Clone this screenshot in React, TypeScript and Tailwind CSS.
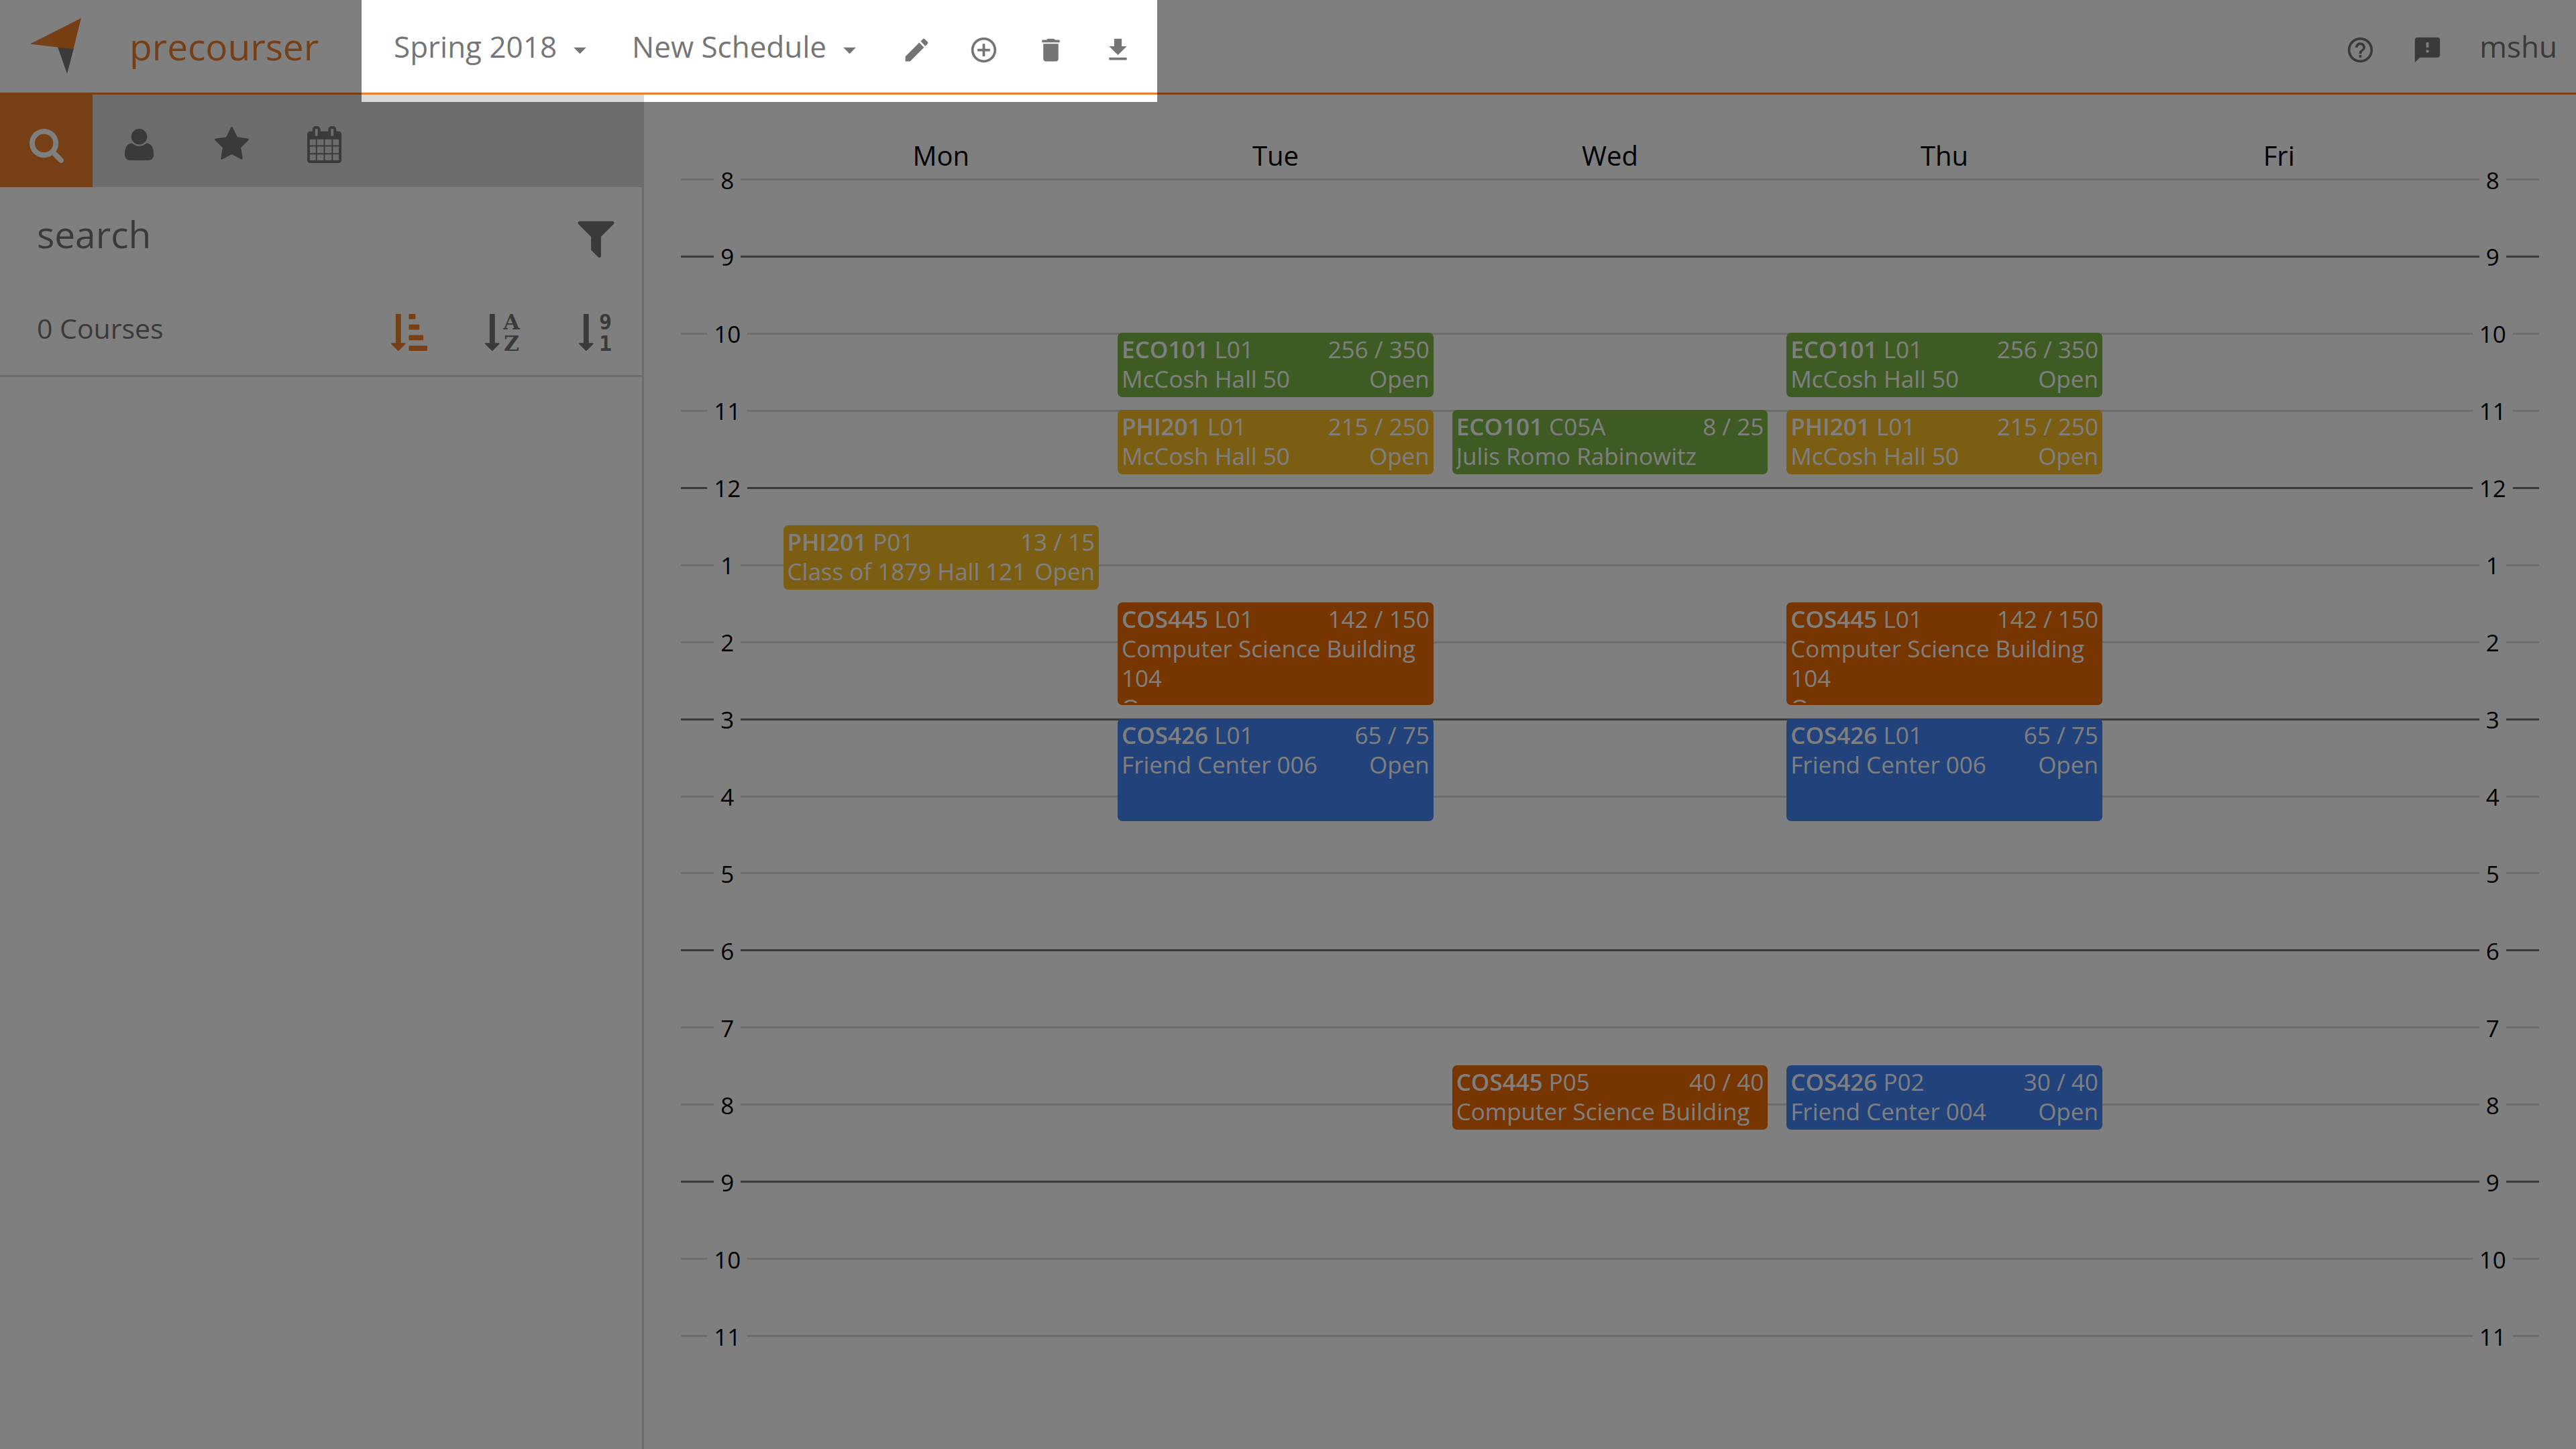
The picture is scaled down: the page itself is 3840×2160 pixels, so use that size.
import type { ReactNode } from "react";
import { MdEdit, MdAddCircleOutline, MdDelete, MdFileDownload, MdHelpOutline, MdFeedback, MdArrowDropDown } from "react-icons/md";

type Course = {
  code: string;
  section: string;
  seats: string;
  place: string;
  status?: string;
  day: number;
  start: number;
  minutes: number;
  tone: string;
};

const GREEN = "bg-[#7eb648]";
const YELLOW = "bg-[#f8bd26]";
const ORANGE = "bg-[#ee6a00]";
const BLUE = "bg-[#4484f6]";

/* start is counted in minutes from 8:00 */
const EVENTS: Course[] = [
  { code: "PHI201", section: "P01", seats: "13 / 15", place: "Class of 1879 Hall 121", status: "Open", day: 1, start: 270, minutes: 50, tone: YELLOW },
  { code: "ECO101", section: "L01", seats: "256 / 350", place: "McCosh Hall 50", status: "Open", day: 2, start: 120, minutes: 50, tone: GREEN },
  { code: "PHI201", section: "L01", seats: "215 / 250", place: "McCosh Hall 50", status: "Open", day: 2, start: 180, minutes: 50, tone: YELLOW },
  { code: "COS445", section: "L01", seats: "142 / 150", place: "Computer Science Building 104", status: "Open", day: 2, start: 330, minutes: 80, tone: ORANGE },
  { code: "COS426", section: "L01", seats: "65 / 75", place: "Friend Center 006", status: "Open", day: 2, start: 420, minutes: 80, tone: BLUE },
  { code: "ECO101", section: "C05A", seats: "8 / 25", place: "Julis Romo Rabinowitz", day: 3, start: 180, minutes: 50, tone: GREEN },
  { code: "COS445", section: "P05", seats: "40 / 40", place: "Computer Science Building", day: 3, start: 690, minutes: 50, tone: ORANGE },
  { code: "ECO101", section: "L01", seats: "256 / 350", place: "McCosh Hall 50", status: "Open", day: 4, start: 120, minutes: 50, tone: GREEN },
  { code: "PHI201", section: "L01", seats: "215 / 250", place: "McCosh Hall 50", status: "Open", day: 4, start: 180, minutes: 50, tone: YELLOW },
  { code: "COS445", section: "L01", seats: "142 / 150", place: "Computer Science Building 104", status: "Open", day: 4, start: 330, minutes: 80, tone: ORANGE },
  { code: "COS426", section: "L01", seats: "65 / 75", place: "Friend Center 006", status: "Open", day: 4, start: 420, minutes: 80, tone: BLUE },
  { code: "COS426", section: "P02", seats: "30 / 40", place: "Friend Center 004", status: "Open", day: 4, start: 690, minutes: 50, tone: BLUE },
];

const HOURS = [8, 9, 10, 11, 12, 1, 2, 3, 4, 5, 6, 7, 8, 9, 10, 11];
const DAYS = ["Mon", "Tue", "Wed", "Thu", "Fri"];

const PATHS = {
  search:
    "M1216 832q0-185-131.5-316.5t-316.5-131.5-316.5 131.5-131.5 316.5 131.5 316.5 316.5 131.5 316.5-131.5 131.5-316.5zm512 832q0 52-38 90t-90 38q-54 0-90-38l-343-342q-179 124-399 124-143 0-273.5-55.5t-225-150-150-225-55.5-273.5 55.5-273.5 150-225 225-150 273.5-55.5 273.5 55.5 225 150 150 225 55.5 273.5q0 220-124 399l343 343q37 37 37 90z",
  user: "M1600 1405q0 120-73 189.5t-194 69.5h-874q-121 0-194-69.5t-73-189.5q0-53 3.5-103.5t14-109 26.500-108.500 43-97.500 62-81 85.500-53.500 111.500-20q9 0 42 21.500t74.500 48 108 48 133.500 21.500 133.500-21.500 108-48 74.500-48 42-21.500q61 0 111.500 20t85.500 53.500 62 81 43 97.500 26.500 108.500 14 109 3.500 103.500zm-320-893q0 159-112.500 271.500t-271.500 112.500-271.500-112.500-112.500-271.500 112.500-271.500 271.500-112.500 271.500 112.500 112.500 271.500z",
  star: "M1728 647q0 22-26 48l-363 354 86 500q1 7 1 20 0 21-10.5 35.5t-30.5 14.5q-19 0-40-12l-449-236-449 236q-22 12-40 12-21 0-31.5-14.5t-10.5-35.5q0-6 2-20l86-500-364-354q-25-27-25-48 0-37 56-46l502-73 225-455q19-41 49-41t49 41l225 455 502 73q56 9 56 46z",
  calendar:
    "M192 1664h288v-288h-288v288zm352 0h320v-288h-320v288zm-352-352h288v-320h-288v320zm352 0h320v-320h-320v320zm-352-384h288v-288h-288v288zm736 736h320v-288h-320v288zm-384-736h320v-288h-320v288zm768 736h288v-288h-288v288zm-384-352h320v-320h-320v320zm-352-864v-288q0-13-9.500-22.500t-22.500-9.500h-64q-13 0-22.500 9.500t-9.500 22.500v288q0 13 9.500 22.500t22.500 9.500h64q13 0 22.500-9.500t9.500-22.500zm736 864h288v-320h-288v320zm-384-384h320v-288h-320v288zm384 0h288v-288h-288v288zm32-480v-288q0-13-9.500-22.500t-22.500-9.500h-64q-13 0-22.500 9.500t-9.500 22.500v288q0 13 9.500 22.500t22.500 9.500h64q13 0 22.500-9.500t9.500-22.500zm384-64v1280q0 52-38 90t-90 38h-1408q-52 0-90-38t-38-90v-1280q0-52 38-90t90-38h128v-96q0-66 47-113t113-47h64q66 0 113 47t47 113v96h384v-96q0-66 47-113t113-47h64q66 0 113 47t47 113v96h128q52 0 90 38t38 90z",
  filter:
    "M1595 295q17 41-14 70l-493 493v742q0 42-39 59-13 5-25 5-27 0-45-19l-256-256q-19-19-19-45v-486l-493-493q-31-29-14-70 17-39 59-39h1280q42 0 59 39z",
  arrow:
    "M736 1440q0 12-10 24l-319 319q-10 9-23 9-12 0-23-9l-320-320q-15-16-7-35 8-20 30-20h192v-1376q0-14 9-23t23-9h192q14 0 23 9t9 23v1376h192q14 0 23 9t9 23z",
  bars: "M1792 1568v192q0 14-9 23t-23 9h-832q-14 0-23-9t-9-23v-192q0-14 9-23t23-9h832q14 0 23 9t9 23zm-192-512v192q0 14-9 23t-23 9h-640q-14 0-23-9t-9-23v-192q0-14 9-23t23-9h640q14 0 23 9t9 23zm-192-512v192q0 14-9 23t-23 9h-448q-14 0-23-9t-9-23v-192q0-14 9-23t23-9h448q14 0 23 9t9 23zm-192-512v192q0 14-9 23t-23 9h-256q-14 0-23-9t-9-23v-192q0-14 9-23t23-9h256q14 0 23 9t9 23z",
};

function Glyph({ d, size = "size-[55px]" }: { d: string; size?: string }) {
  return (
    <svg viewBox="0 0 1792 1792" className={size} fill="currentColor" aria-hidden="true">
      <path d={d} />
    </svg>
  );
}

function SortPair({ top, bottom, font }: { top: string; bottom: string; font: string }) {
  return (
    <svg viewBox="0 0 1792 1792" className="size-[55px] overflow-visible" fill="currentColor" aria-hidden="true">
      <path d={PATHS.arrow} />
      <g fontFamily={font} fontWeight="700" fontSize="1030" textAnchor="middle">
        <text x="1320" y="764">{top}</text>
        <text x="1320" y="1792">{bottom}</text>
      </g>
    </svg>
  );
}

function Logo() {
  return (
    <svg viewBox="0 0 76 84" className="h-[84px] w-[76px]" aria-hidden="true">
      <path d="M41 43 65 45 55 83Z" fill="#757575" />
      <path d="M76 0 0 38.500 64.500 46Z" fill="#ee7c28" />
      <path d="M0 38.500 24 27 42 43.500Z" fill="#ec8434" />
    </svg>
  );
}

function Tab({ label, active = false, children }: { label: string; active?: boolean; children: ReactNode }) {
  return (
    <button
      aria-label={label}
      className={`flex w-[138px] items-center justify-center pt-[11px] ${active ? "bg-[#ee7f2d] text-white" : ""}`}
    >
      {children}
    </button>
  );
}

function TopBar() {
  const icon = "mt-[10px] size-[45px]";
  return (
    <header className="flex h-[141px] items-stretch border-b-[3px] border-[#ee7f2d] text-[44px] text-[#757575]">
      <a href="#" className="flex w-[539px] items-center gap-[72px] pl-[45px] text-[55px] text-[#ee7f2d]">
        <Logo />
        precourser
      </a>
      <div className="relative flex w-[1186px] items-center">
        <button className="ml-[48px] flex items-center gap-[12px]">
          Spring 2018
          <MdArrowDropDown className={icon} />
        </button>
        <button className="ml-[55px] flex items-center gap-[12px]">
          New Schedule
          <MdArrowDropDown className={icon} />
        </button>
        <div className="ml-[55px] flex gap-[55px]">
          <button aria-label="Rename schedule"><MdEdit className={icon} /></button>
          <button aria-label="Add schedule"><MdAddCircleOutline className={icon} /></button>
          <button aria-label="Delete schedule"><MdDelete className={icon} /></button>
          <button aria-label="Download schedule"><MdFileDownload className={icon} /></button>
        </div>
        {/* spotlight of the guided tour: dims everything outside the schedule tools */}
        <div className="pointer-events-none absolute inset-x-0 top-0 -bottom-[14px] z-20 shadow-[0_0_0_5000px_rgba(0,0,0,0.5)]" />
      </div>
      <div className="ml-auto flex items-center gap-[55px] pr-[28px]">
        <button aria-label="Help"><MdHelpOutline className={icon} /></button>
        <button aria-label="Feedback"><MdFeedback className={icon} /></button>
        <button>mshu</button>
      </div>
    </header>
  );
}

function Sidebar() {
  return (
    <aside className="flex w-[960px] shrink-0 flex-col border-r-[3px] border-[#dadada] text-[#757575]">
      <nav className="-mr-[3px] flex h-[138px] bg-[#dadada]">
        <Tab label="Search" active><Glyph d={PATHS.search} /></Tab>
        <Tab label="Account"><Glyph d={PATHS.user} /></Tab>
        <Tab label="Favorites"><Glyph d={PATHS.star} /></Tab>
        <Tab label="Calendar"><Glyph d={PATHS.calendar} /></Tab>
      </nav>
      <div className="flex h-[146px] items-center justify-between pr-[34px] pb-[6px] pl-[55px]">
        <input
          type="text"
          aria-label="search"
          placeholder="search"
          className="h-[76px] min-w-0 flex-1 bg-transparent text-[55px] outline-none placeholder:text-[#757575]"
        />
        <button aria-label="Filter" className="mt-[11px]"><Glyph d={PATHS.filter} size="size-[69px]" /></button>
      </div>
      <div className="flex h-[137px] items-center border-b-[3px] border-[#dadada] pr-[40px] pb-[4px] pl-[55px] text-[41px]">
        0 Courses
        <div className="mt-[11px] ml-auto flex gap-[85px]">
          <button aria-label="Sort by relevance" className="text-[#ee7f2d]"><Glyph d={PATHS.arrow + PATHS.bars} /></button>
          <button aria-label="Sort by name"><SortPair top="A" bottom="Z" font="DejaVu Serif" /></button>
          <button aria-label="Sort by rating"><SortPair top="9" bottom="1" font="DejaVu Sans Mono" /></button>
        </div>
      </div>
    </aside>
  );
}

function HourLabel({ hour, line }: { hour: number; line: string }) {
  return (
    <div className="flex w-[5%] items-center">
      <div className={`h-[3px] flex-1 ${line}`} />
      <span className="px-[10px] pt-[2px] leading-[48px]">{hour}</span>
      <div className={`h-[3px] flex-1 ${line}`} />
    </div>
  );
}

function Calendar() {
  return (
    <main className="flex min-w-0 flex-1 flex-col p-[55px] text-[35px] text-black">
      <div className="grid h-[70px] grid-cols-5 items-center px-[5%] pt-[2px] text-center text-[40px]">
        {DAYS.map((d) => (
          <div key={d}>{d}</div>
        ))}
      </div>
      <div className="relative flex flex-1 flex-col">
        {HOURS.map((h, i) => {
          const line = i % 3 === 1 ? "bg-[#757575]" : "bg-[#dadada]";
          return (
            <div key={i} className="min-h-[100px] flex-1 basis-0">
              <div className="flex h-[3px] items-center">
                <HourLabel hour={h} line={line} />
                <div className={`h-[3px] flex-1 ${line}`} />
                <HourLabel hour={h} line={line} />
              </div>
            </div>
          );
        })}
        <div className="absolute inset-0 grid grid-cols-5 grid-rows-[repeat(96,minmax(0,1fr))] px-[5%]">
          {EVENTS.map((e, i) => (
            <div
              key={i}
              className={`mx-[14px] overflow-hidden rounded-[7px] px-[6px] py-[3px] leading-[44px] text-white ${e.tone}`}
              style={{ gridColumn: e.day, gridRow: `${e.start / 10 + 1} / span ${e.minutes / 10}` }}
            >
              <div className="h-full overflow-hidden">
                <div className="flex justify-between">
                  <span><b className="font-semibold">{e.code}</b> {e.section}</span>
                  <span>{e.seats}</span>
                </div>
                <div className="flex flex-wrap justify-between">
                  <span>{e.place}</span>
                  {e.status && <span>{e.status}</span>}
                </div>
              </div>
            </div>
          ))}
        </div>
      </div>
    </main>
  );
}

export default function App() {
  return (
    <div className="flex min-h-screen flex-col overflow-hidden bg-white font-['Open_Sans',sans-serif]">
      <TopBar />
      <div className="flex flex-1">
        <Sidebar />
        <Calendar />
      </div>
    </div>
  );
}
